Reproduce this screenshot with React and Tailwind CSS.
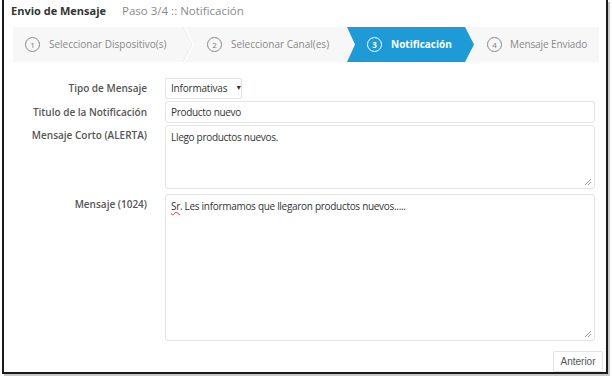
import React from "react";

const Grip = () => (
  <svg className="absolute right-[2px] bottom-[2px]" width="8" height="8" viewBox="0 0 8 8">
    <path d="M7 1L1 7M7 4L4 7" stroke="#999" strokeWidth="1" />
  </svg>
);

const Circle = ({ n, active }) => (
  <span
    className={
      "flex items-center justify-center w-[15px] h-[15px] rounded-full border-[1.5px] text-[8px] leading-none " +
      (active ? "border-white text-white" : "border-[#888] text-[#777]")
    }
  >
    {n}
  </span>
);

const Chevron = () => (
  <svg width="12" height="35" viewBox="0 0 12 35" className="shrink-0">
    <path d="M1 0L10 17.5L1 35" stroke="#fff" strokeWidth="2" fill="none" />
    <path d="M0 0L9 17.5L0 35" stroke="#ececec" strokeWidth="1" fill="none" />
  </svg>
);

export default function App() {
  return (
    <div className="w-[612px] h-[380px] bg-white" style={{ fontFamily: "'Open Sans', 'Liberation Sans', sans-serif" }}>
      <div className="ml-[2px] w-[606px] h-[374px] border-l-2 border-r-2 border-b-2 border-[#1a1a1a] shadow-[2px_2px_0_#c8c8c8] flex flex-col">
        {/* header */}
        <div className="flex items-center h-[22px] pl-[7px] pt-[1px]">
          <span className="text-[11px] font-bold text-[#333]">Envio de Mensaje</span>
          <span className="ml-[16px] text-[11.5px] text-[#8a8a8a]">Paso 3/4 :: Notificación</span>
        </div>

        {/* wizard steps */}
        <div className="mt-[6px] ml-[9px] w-[586px] h-[35px] bg-[#f7f7f7] flex items-center text-[10px]">
          <div className="flex items-center pl-[12px] w-[170px] gap-[9px] text-[#888]">
            <Circle n="1" />
            <span>Seleccionar Dispositivo(s)</span>
          </div>
          <Chevron />
          <div className="flex items-center pl-[12px] gap-[9px] text-[#888] w-[152px]">
            <Circle n="2" />
            <span>Seleccionar Canal(es)</span>
          </div>
          <div className="relative h-[35px] w-[127px] shrink-0">
            <svg className="absolute inset-0" width="127" height="35" viewBox="0 0 127 35">
              <path d="M0 0H118L127 17.5L118 35H0L8 17.5Z" fill="#1e9bd7" />
            </svg>
            <div className="relative flex items-center h-full pl-[20px] gap-[9px] text-white font-bold">
              <Circle n="3" active />
              <span>Notificación</span>
            </div>
          </div>
          <div className="flex items-center pl-[13px] gap-[8px] text-[#888] tracking-[-0.1px]">
            <Circle n="4" />
            <span>Mensaje Enviado</span>
          </div>
        </div>

        {/* form */}
        <div className="mt-[16px] flex flex-col gap-[2px] text-[10px]">
          <div className="flex items-center">
            <label className="w-[143px] text-right font-semibold text-[#555]">Tipo de Mensaje</label>
            <div className="ml-[18px] w-[77px] h-[21px] border border-[#e3e3e3] rounded-[2px] flex items-center pl-[5px] text-[#333] tracking-[-0.2px]">
              Informativas
              <span className="ml-[8px] text-[7px]">▼</span>
            </div>
          </div>
          <div className="flex items-center">
            <label className="w-[143px] text-right font-semibold text-[#555]">Titulo de la Notificación</label>
            <div className="ml-[18px] w-[430px] h-[22px] border border-[#e3e3e3] rounded-[3px] flex items-center pl-[5px] text-[#333] tracking-[-0.3px]">
              Producto nuevo
            </div>
          </div>
          <div className="flex items-start">
            <label className="w-[143px] pt-[3px] text-right font-semibold text-[#555]">Mensaje Corto (ALERTA)</label>
            <div className="relative ml-[18px] w-[430px] h-[64px] border border-[#e3e3e3] rounded-[3px] pl-[5px] pt-[4px] text-[#333] tracking-[-0.3px]">
              Llego productos nuevos.
              <Grip />
            </div>
          </div>
          <div className="flex items-start mt-[3px]">
            <label className="w-[143px] pt-[3px] text-right font-semibold text-[#555]">Mensaje (1024)</label>
            <div className="relative ml-[18px] w-[430px] h-[147px] border border-[#e3e3e3] rounded-[3px] pl-[5px] pt-[4px] text-[#333] tracking-[-0.3px]">
              <span className="underline decoration-wavy decoration-red-500 decoration-1">Sr</span>. Les informamos que llegaron productos nuevos.....
              <Grip />
            </div>
          </div>
        </div>

        <div className="flex justify-end mt-[10px] pr-[3px]">
          <button
            className="w-[50px] h-[21px] border border-[#e3e3e3] rounded-[2px] text-[10px] text-[#555]"
            style={{ fontFamily: "'Liberation Sans', Arial, sans-serif" }}
          >
            Anterior
          </button>
        </div>
      </div>
    </div>
  );
}
